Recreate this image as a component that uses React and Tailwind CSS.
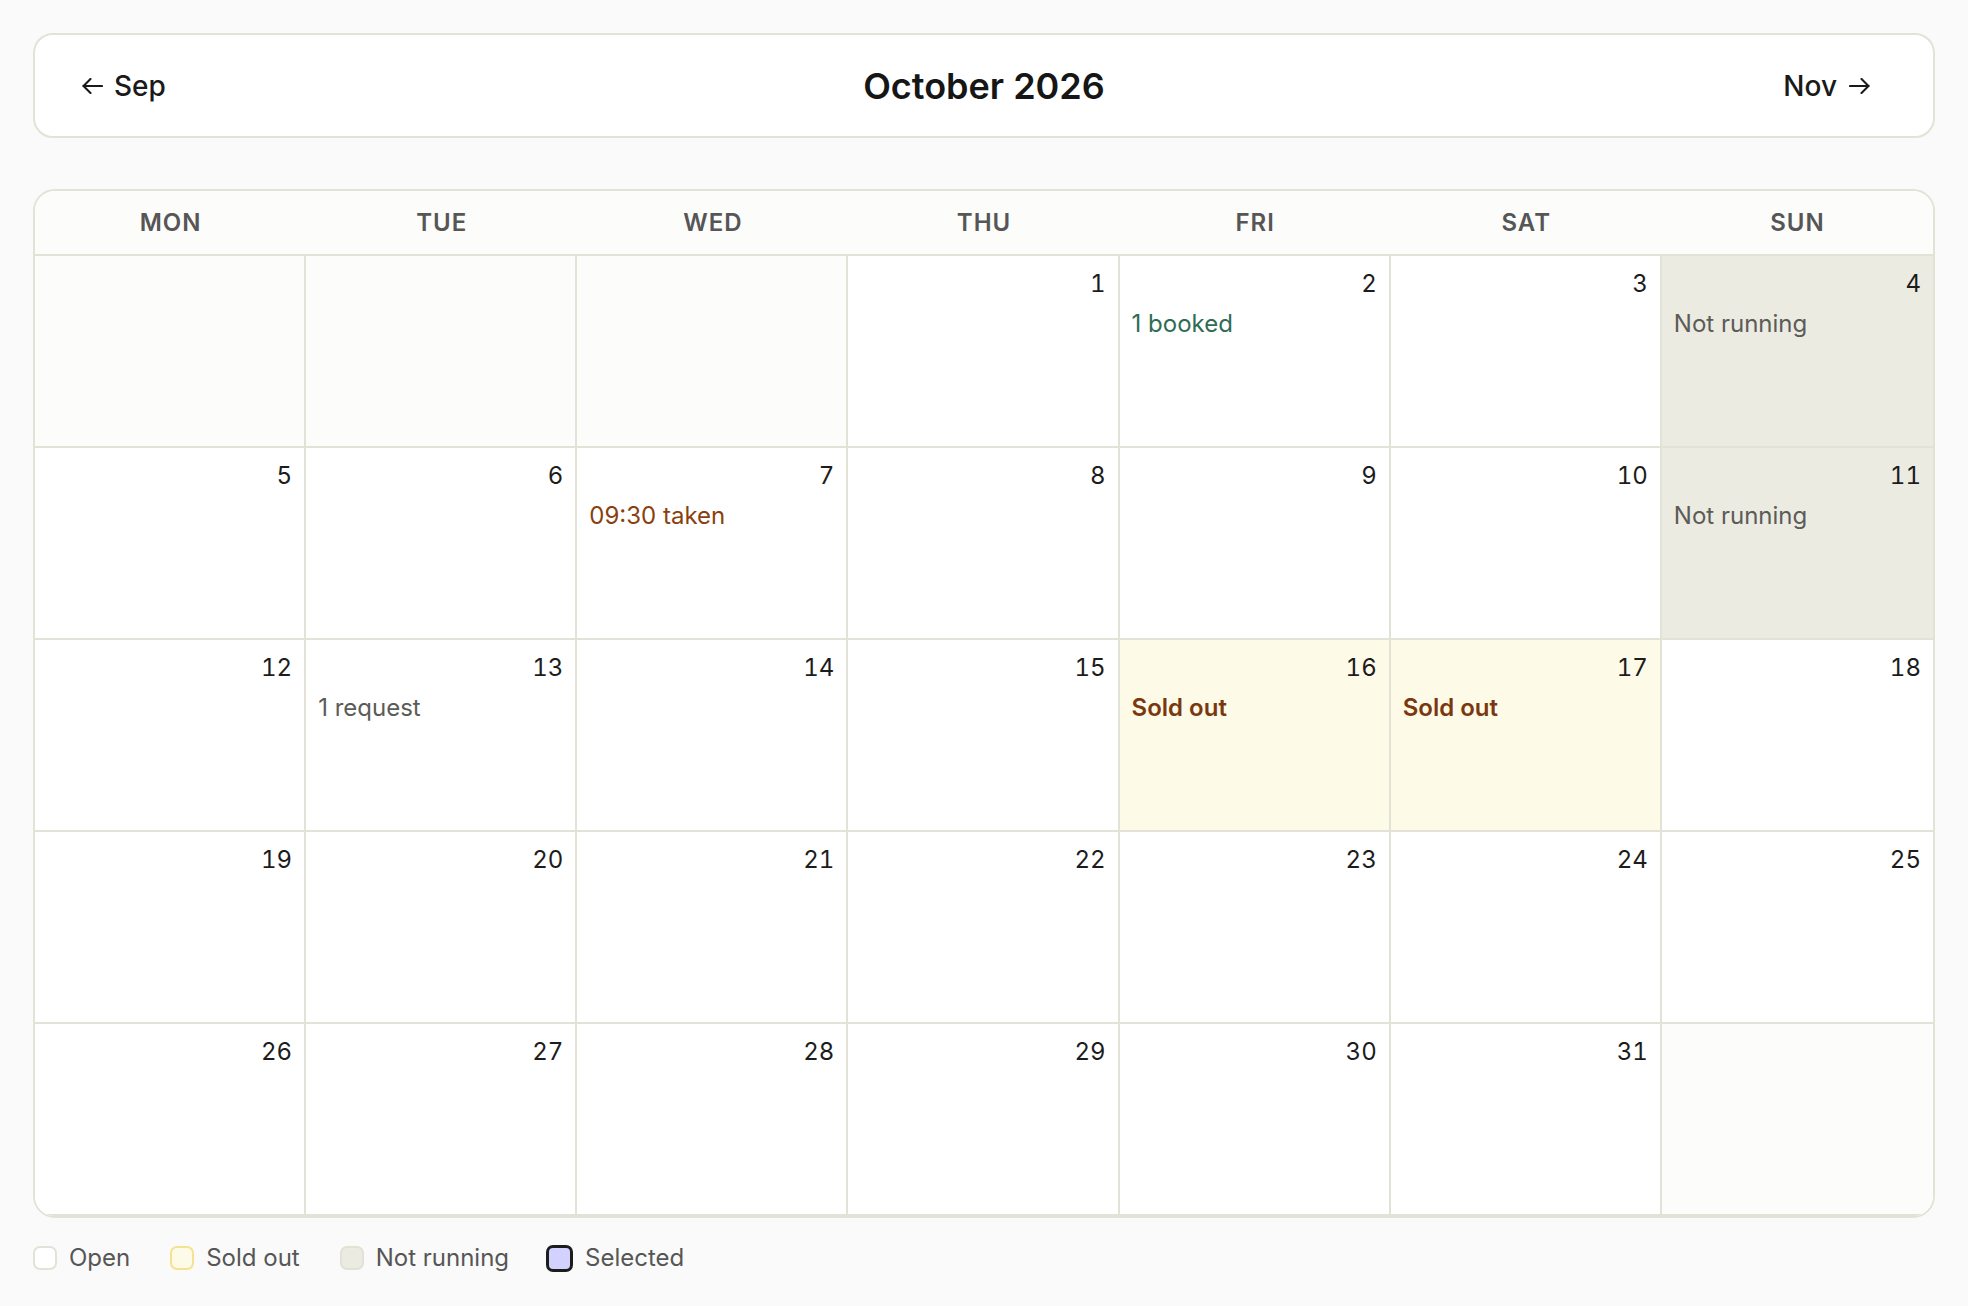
import React from "react";

const DAYS = ["MON", "TUE", "WED", "THU", "FRI", "SAT", "SUN"];

// Notes shown inside specific dates
const NOTES = {
  2: { text: "1 booked", cls: "text-[#2f6c55]" },
  4: { text: "Not running", cls: "text-[#5b5b58]" },
  7: { text: "09:30 taken", cls: "text-[#8a3f10]" },
  11: { text: "Not running", cls: "text-[#5b5b58]" },
  13: { text: "1 request", cls: "text-[#5b5b58]" },
  16: { text: "Sold out", cls: "text-[#7a3811] font-semibold" },
  17: { text: "Sold out", cls: "text-[#7a3811] font-semibold" },
};

const STATUS = {
  4: "off",
  11: "off",
  16: "sold",
  17: "sold",
};

function ArrowLeft() {
  return (
    <svg width="21" height="16" viewBox="0 0 21 16" fill="none" stroke="#1a1a1a" strokeWidth="2.1" strokeLinecap="round" strokeLinejoin="round">
      <path d="M20 8H1.5" />
      <path d="M8.5 1L1.5 8l7 7" />
    </svg>
  );
}

function ArrowRight() {
  return (
    <svg width="21" height="16" viewBox="0 0 21 16" fill="none" stroke="#1a1a1a" strokeWidth="2.1" strokeLinecap="round" strokeLinejoin="round">
      <path d="M1 8h18.5" />
      <path d="M12.5 1l7 7-7 7" />
    </svg>
  );
}

function buildCells() {
  // October 2026 starts on a Thursday; 35 slots, Monday first
  const cells = [];
  for (let i = 0; i < 35; i++) {
    const d = i - 2;
    cells.push(d >= 1 && d <= 31 ? d : null);
  }
  return cells;
}

function Cell({ day, col }) {
  const status = day ? STATUS[day] : null;
  let bg = "bg-white";
  if (!day) bg = "bg-[#fcfcfb]";
  else if (status === "off") bg = "bg-[#ecebe2]";
  else if (status === "sold") bg = "bg-[#fefae8]";
  const note = day ? NOTES[day] : null;
  const border = col === 6 ? "border-b-2" : "border-b-2 border-r-2";
  return (
    <div className={`h-[192px] ${border} border-[#e3e2d6] ${bg} px-3 pt-3 flex flex-col`}>
      <div className="h-8 text-right text-[24px] leading-8 tabular-nums text-[#1c1c1c]">{day ?? ""}</div>
      {note && (
        <div className={`mt-2 text-[24px] leading-8 ${note.cls}`}>{note.text}</div>
      )}
    </div>
  );
}

function Swatch({ cls }) {
  return <span className={`inline-block rounded-[7px] ${cls}`} />;
}

export default function App() {
  const cells = buildCells();
  return (
    <div
      className="min-h-[1306px] bg-[#fafafa] px-[33px] pt-[33px]"
      style={{ fontFamily: "Inter, 'Noto Sans', sans-serif" }}
    >
      {/* Month navigation */}
      <div className="h-[105px] rounded-[20px] border-2 border-[#e3e2d6] bg-white px-[47px] grid grid-cols-3 items-center">
        <button className="justify-self-start flex items-center gap-[11px] text-[28px] font-medium text-[#1a1a1a]">
          <ArrowLeft />
          <span>Sep</span>
        </button>
        <h1 className="justify-self-center text-[36px] font-semibold text-[#161616]">October 2026</h1>
        <button className="justify-self-end flex items-center gap-[12px] text-[28px] font-medium text-[#1a1a1a] pr-[16px]">
          <span>Nov</span>
          <ArrowRight />
        </button>
      </div>

      {/* Month grid */}
      <div className="mt-[51px] rounded-[22px] border-2 border-[#e3e2d6] overflow-hidden bg-white">
        <div className="grid grid-cols-7 h-[65px] border-b-2 border-[#e3e2d6] bg-[#fcfcfb]">
          {DAYS.map((d) => (
            <div key={d} className="flex items-center justify-center text-[24px] font-semibold tracking-[0.04em] text-[#565656]">
              {d}
            </div>
          ))}
        </div>
        <div className="grid grid-cols-7">
          {cells.map((day, i) => (
            <Cell key={i} day={day} col={i % 7} />
          ))}
        </div>
      </div>

      {/* Legend */}
      <div className="mt-6 flex items-center gap-10 text-[24px] leading-8 text-[#565656]">
        <div className="flex items-center gap-3">
          <Swatch cls="w-6 h-6 bg-white border-2 border-[#e3e2d6]" />
          <span>Open</span>
        </div>
        <div className="flex items-center gap-3">
          <Swatch cls="w-6 h-6 bg-[#fefae8] border-2 border-[#f6e28e]" />
          <span>Sold out</span>
        </div>
        <div className="flex items-center gap-3">
          <Swatch cls="w-6 h-6 bg-[#ecebe2] border-2 border-[#e2e1d4]" />
          <span>Not running</span>
        </div>
        <div className="flex items-center gap-3 -ml-[3px]">
          <Swatch cls="w-[27px] h-[27px] bg-[#d3d1fd] border-[3px] border-[#1c1c1c]" />
          <span>Selected</span>
        </div>
      </div>
    </div>
  );
}
